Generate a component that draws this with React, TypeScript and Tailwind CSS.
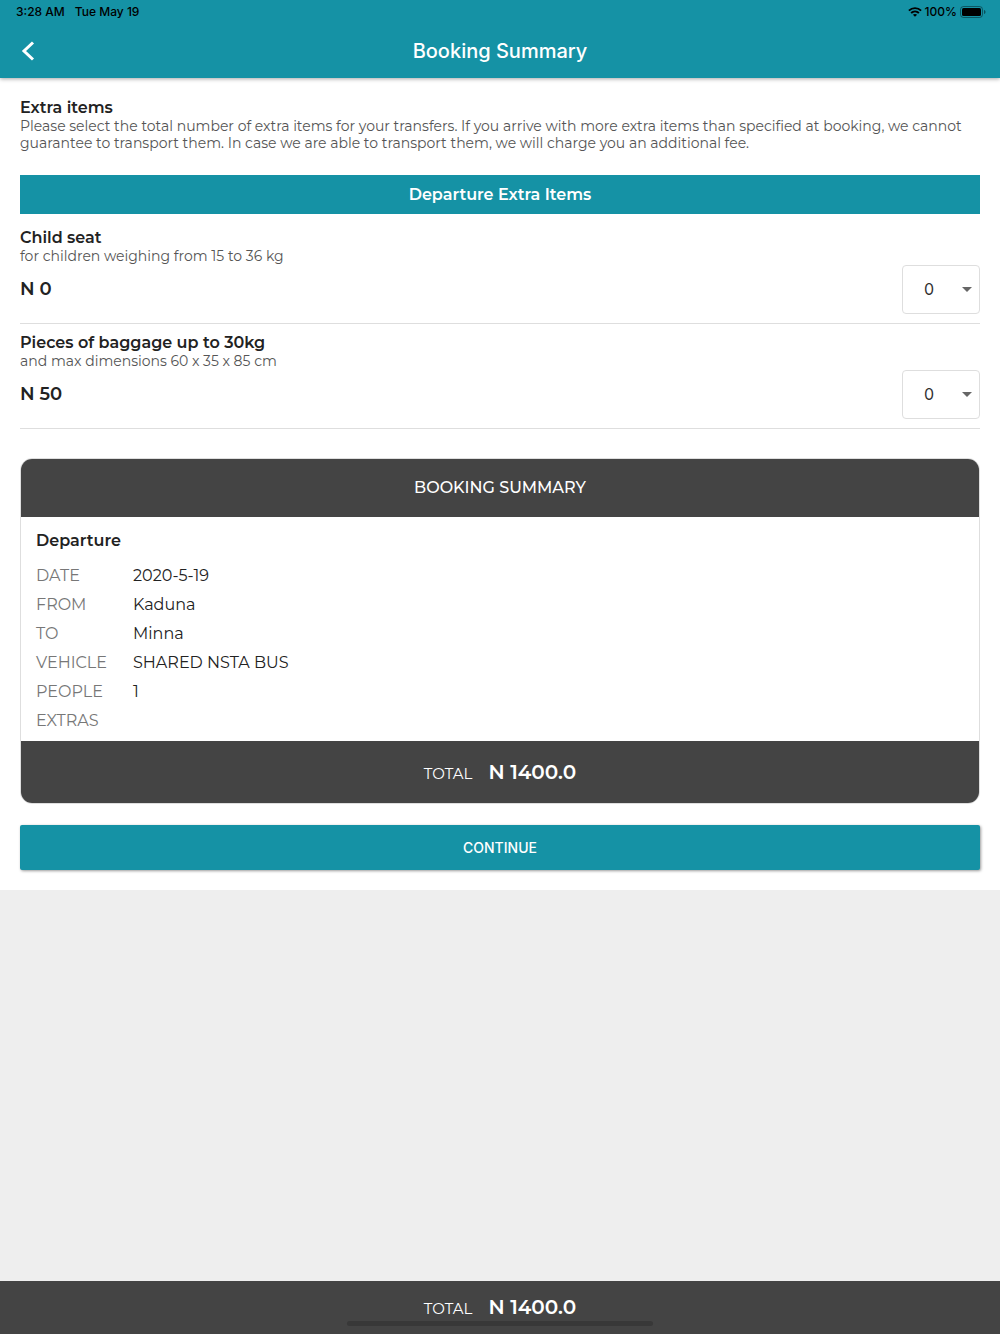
import React from 'react';

interface ExtraItem {
  id: string;
  title: string;
  description: string;
  price: string;
}

const extraItems: ExtraItem[] = [
  { id: 'child-seat', title: 'Child seat', description: 'for children weighing from 15 to 36 kg', price: 'N 0' },
  { id: 'baggage', title: 'Pieces of baggage up to 30kg', description: 'and max dimensions 60 x 35 x 85 cm', price: 'N 50' },
];

const details = [
  { label: 'DATE', value: '2020-5-19' },
  { label: 'FROM', value: 'Kaduna' },
  { label: 'TO', value: 'Minna' },
  { label: 'VEHICLE', value: 'SHARED NSTA BUS' },
  { label: 'PEOPLE', value: '1' },
  { label: 'EXTRAS', value: '' },
];

const StatusBar: React.FC = () => (
  <div className="flex h-6 items-center justify-between pr-[14px] pl-4 text-[12px] font-medium text-black">
    <div className="flex gap-[10px]">
      <span>3:28 AM</span>
      <span>Tue May 19</span>
    </div>
    <div className="flex items-center gap-[3px]">
      <svg width="14" height="10" viewBox="0 0 14 10" fill="none" stroke="currentColor" strokeWidth="1.9">
        <path d="M0.9 3.7C4.3 0.3 9.7 0.3 13.1 3.7" />
        <path d="M3.1 6C5.3 3.9 8.7 3.9 10.9 6" />
        <path d="M7 9.8L4.9 7.7C6.1 6.6 7.9 6.6 9.1 7.7Z" fill="currentColor" stroke="none" />
      </svg>
      <span>100%</span>
      <svg width="26" height="12" viewBox="0 0 26 12">
        <rect x="0.5" y="0.5" width="22" height="11" rx="3" fill="none" stroke="#000" strokeOpacity="0.4" />
        <rect x="2" y="2" width="19" height="8" rx="1.5" fill="#000" />
        <path d="M24 4v4c1-.4 1.500-1.100 1.500-2S25 4.400 24 4z" fill="#000" fillOpacity="0.45" />
      </svg>
    </div>
  </div>
);

const ExtraItemRow: React.FC<{ item: ExtraItem }> = ({ item }) => (
  <div className="border-b border-[#dedede] py-[9px]">
    <label htmlFor={item.id} className="block text-[16px] leading-5 font-semibold text-[#222]">{item.title}</label>
    <p className="text-[14px] leading-[17px] text-[#555]">{item.description}</p>
    <div className="flex items-center justify-between">
      <span className="text-[18px] font-semibold text-[#222]">{item.price}</span>
      <div className="relative">
        <select
          id={item.id}
          defaultValue="0"
          className="block h-[49px] w-[78px] appearance-none rounded-[4px] border border-[#dedede] bg-white pb-0.5 pl-[21px] font-['Inter',sans-serif] text-[16px] text-[#333]"
        >
          <option>0</option>
          <option>1</option>
          <option>2</option>
          <option>3</option>
        </select>
        <svg className="pointer-events-none absolute top-[22px] right-2" width="10" height="5" viewBox="0 0 10 5">
          <path d="M0 0h10L5 5z" fill="#666" />
        </svg>
      </div>
    </div>
  </div>
);

const Total: React.FC = () => (
  <div className="flex h-7 items-baseline justify-center gap-4 leading-7 text-white">
    <span className="text-[15px]">TOTAL</span>
    <span className="text-[20px] font-semibold">N 1400.0</span>
  </div>
);

export default function App() {
  return (
    <div className="flex min-h-screen flex-col bg-[#eee] font-['Montserrat','Inter',sans-serif]">
      <header className="z-10 bg-[#1592a5] font-['Inter',sans-serif] shadow-[0_1px_4px_rgba(0,0,0,0.35)]">
        <StatusBar />
        <div className="grid h-[54px] grid-cols-[60px_1fr_60px] items-center text-white">
          <button type="button" aria-label="Back" className="flex h-full items-center pl-[21px]">
            <svg width="14" height="20" viewBox="0 0 14 20" fill="none" stroke="currentColor" strokeWidth="3">
              <path d="M12 1.500L3 10l9 8.500" />
            </svg>
          </button>
          <h1 className="text-center text-[20px] font-medium">Booking Summary</h1>
        </div>
      </header>

      <main className="bg-white px-5 py-5">
        <h2 className="text-[16px] leading-5 font-semibold text-[#222]">Extra items</h2>
        <p className="text-[14px] leading-[17px] text-[#555]">
          Please select the total number of extra items for your transfers. If you arrive with more extra items than specified at booking, we cannot guarantee to transport them. In case we are able to transport them, we will charge you an additional fee.
        </p>

        <h2 className="mt-[23px] mb-[5px] bg-[#1592a5] text-center text-[16px] leading-[39px] font-semibold text-white">
          Departure Extra Items
        </h2>
        {extraItems.map((item) => (
          <ExtraItemRow key={item.id} item={item} />
        ))}

        {/* Summary card */}
        <section className="mt-[29px] overflow-hidden rounded-[12px] border border-[#dedede]">
          <h2 className="bg-[#444] text-center text-[16px] leading-[58px] font-medium text-white">BOOKING SUMMARY</h2>
          <div className="px-[15px] pt-[14px] pb-[6px]">
            <h3 className="mb-[10px] text-[16px] leading-5 font-semibold text-[#222]">Departure</h3>
            <dl className="text-[16px] leading-[29px]">
              {details.map((row) => (
                <div key={row.label} className="flex">
                  <dt className="w-[97px] text-[#777]">{row.label}</dt>
                  <dd className="text-[#222]">{row.value}</dd>
                </div>
              ))}
            </dl>
          </div>
          <div className="bg-[#444] py-[17px]">
            <Total />
          </div>
        </section>

        <button
          type="button"
          className="mt-[21px] block h-[45px] w-full rounded-[2px] bg-[#1592a5] font-['Inter',sans-serif] text-[14px] font-medium text-white shadow-[1px_1px_3px_rgba(0,0,0,0.4)]"
        >
          CONTINUE
        </button>
      </main>

      {/* Sticky total with home indicator */}
      <footer className="sticky bottom-0 mt-auto bg-[#444] pt-3 pb-2">
        <Total />
        <div className="mx-auto h-[5px] w-[306px] rounded-full bg-[#383838]" />
      </footer>
    </div>
  );
}
